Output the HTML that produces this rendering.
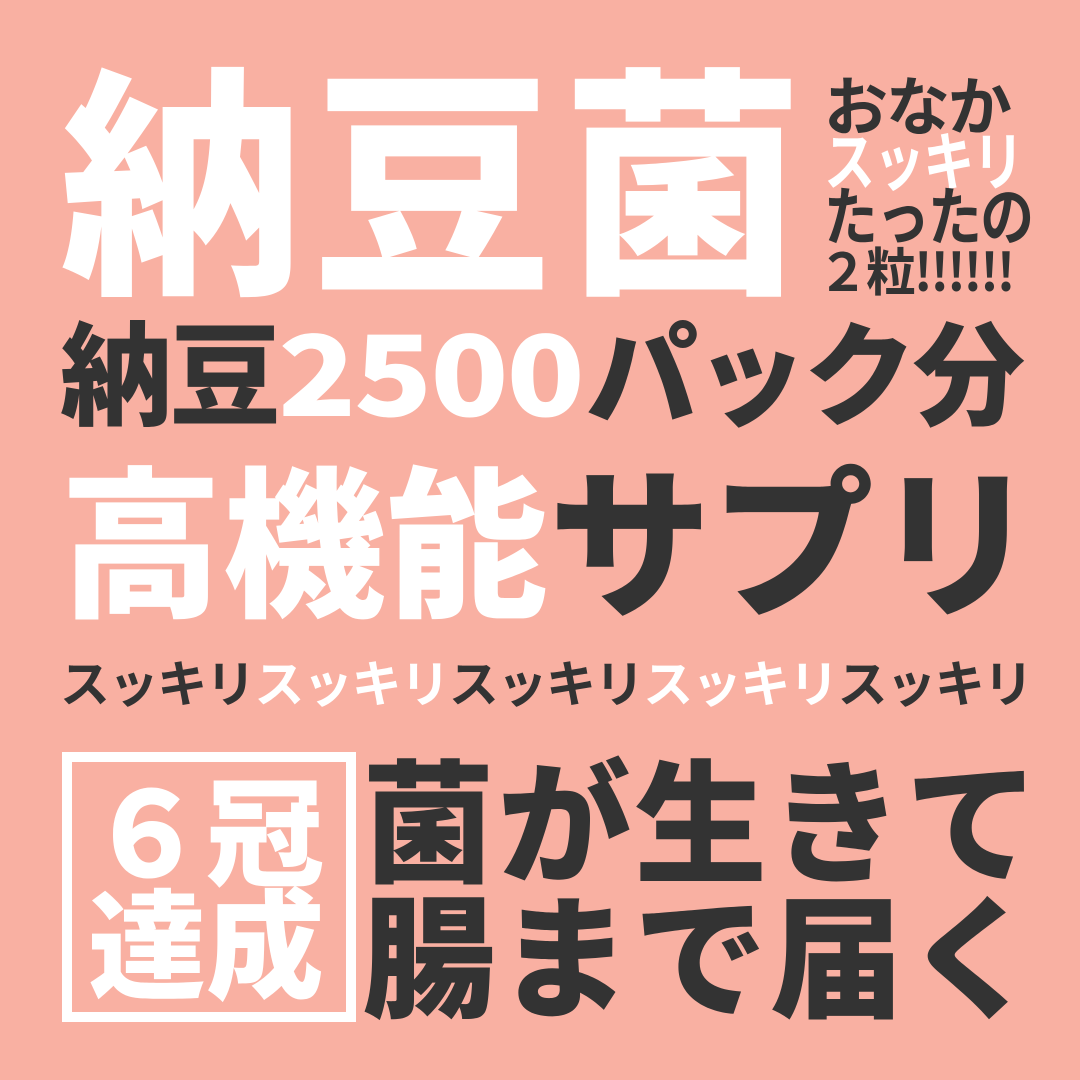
<!DOCTYPE html>
<html><head><meta charset="utf-8"><style>
body{margin:0;width:1080px;height:1080px;background:#F9B0A2;overflow:hidden;position:relative;font-family:"Liberation Sans","Noto Sans CJK JP",sans-serif;font-weight:700;color:#333}
div{position:absolute;white-space:nowrap;line-height:1}
.w{color:#fff}
.r{display:block;transform-origin:0 0;height:55px}
</style></head><body>
<div class="w" style="left:60px;top:48px;font-size:242px;letter-spacing:9px;font-family:'Noto Sans CJK JP',sans-serif;font-weight:900">納豆菌</div>
<div style="left:824px;top:76px;font-size:64px;line-height:55px;letter-spacing:-2px;font-family:'Noto Sans CJK JP',sans-serif">
<span class="r">おなか</span>
<span class="r w" style="transform:scaleX(0.8)">スッキリ</span>
<span class="r" style="transform:scaleX(0.84)">たったの</span>
<span class="r" style="font-size:52px;margin-left:-6px;transform:scaleX(0.96)">２粒!!!!!!</span></div>
<div style="left:60px;top:312px;font-size:112px;letter-spacing:-3px;font-family:'Noto Sans CJK JP',sans-serif;font-weight:900">納豆<span style="display:inline-block;width:308px;vertical-align:top"><span class="w" style="display:inline-block;transform:scaleX(1.15);transform-origin:0 0;letter-spacing:-2px">2500</span></span>パック分</div>
<div style="left:60px;top:453px;font-size:162px;letter-spacing:1px;font-family:'Noto Sans CJK JP',sans-serif;font-weight:900"><span class="w">高機能</span>サプリ</div>
<div style="left:60px;top:656px;font-size:50px;letter-spacing:-1.4px;font-family:'Noto Sans CJK JP',sans-serif">スッキリ<span class="w">スッキリ</span>スッキリ<span class="w">スッキリ</span>スッキリ</div>
<div style="left:62px;top:752px;width:274px;height:250px;border:10px solid #fff"></div>
<div class="w" style="left:88px;top:770px;font-size:118px;line-height:112px;font-family:'Noto Sans CJK JP',sans-serif;font-weight:900">６冠<br>達成</div>
<div style="left:362px;top:748px;font-size:133px;line-height:135px;letter-spacing:3px;font-family:'Noto Sans CJK JP',sans-serif;font-weight:900">菌が生きて<br>腸まで届く</div>
</body></html>
